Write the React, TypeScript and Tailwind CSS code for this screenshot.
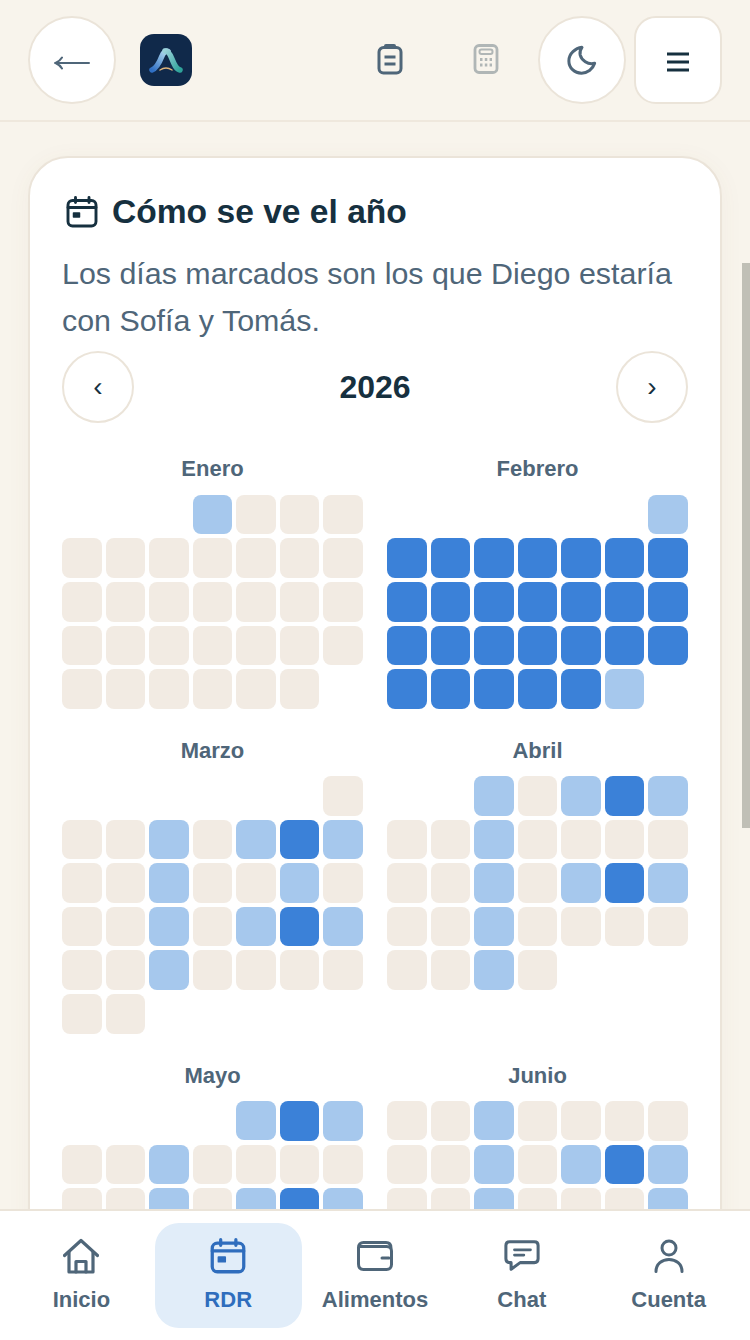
import React from "react";

const font = { fontFamily: "'Liberation Sans', Arial, sans-serif" };

type Month = { name: string; offset: number; days: number; pattern: string };

const months: Month[] = [
  { name: "Enero", offset: 3, days: 31, pattern: "l" },
  { name: "Febrero", offset: 6, days: 28, pattern: "lddddddddddddddddddddddddddl" },
  { name: "Marzo", offset: 6, days: 31, pattern: "b" + "bblbldl" + "bblbblb" + "bblbldl" + "bblbbbb" + "bb" },
  { name: "Abril", offset: 2, days: 30, pattern: "lbldl" + "bblbbbb" + "bblbldl" + "bblbbbb" + "bblb" },
  { name: "Mayo", offset: 4, days: 31, pattern: "ldl" + "bblbbbb" + "bblbldl" + "bblbbbb" + "bblbldl" },
  { name: "Junio", offset: 0, days: 30, pattern: "bblbbbb" + "bblbldl" + "bblbbbl" + "bblbbbb" + "bb" },
];

function Cell({ kind }: { kind: string }) {
  if (kind === "d") return <div className="aspect-square rounded-lg bg-[#3b81d8]" />;
  if (kind === "l") return <div className="aspect-square rounded-lg bg-[#a6c8ed]" />;
  return <div className="aspect-square rounded-lg bg-[#f2ebe3]" />;
}

function MonthGrid({ m }: { m: Month }) {
  const cells = [];
  for (let i = 0; i < m.offset; i++) cells.push(<div key={"e" + i} />);
  for (let d = 0; d < m.days; d++) cells.push(<Cell key={d} kind={m.pattern[d] || "b"} />);
  return (
    <div>
      <div className="mb-[12.4px] text-center text-[22px] leading-[26px] font-bold text-[#4f6679]">{m.name}</div>
      <div className="grid grid-cols-7 gap-1">{cells}</div>
    </div>
  );
}

function CalendarIcon({ size, color }: { size: number; color: string }) {
  return (
    <svg width={size} height={size} viewBox="0 0 32 32" fill="none" stroke={color} strokeWidth="2.9" strokeLinecap="round" strokeLinejoin="round">
      <rect x="2" y="4.5" width="28" height="25.5" rx="4.5" />
      <path d="M2 11.5H30M9.5 1.5V6.5M23 1.5V6.5" />
      <rect x="7.5" y="17" width="6" height="4" fill={color} strokeWidth="1.5" strokeLinejoin="round" />
    </svg>
  );
}

function NavItem({ label, active, children }: { label: string; active?: boolean; children: React.ReactNode }) {
  return (
    <div className={active ? "flex h-[105px] flex-col items-center rounded-3xl bg-[#e1edf9] pt-[14px] text-[#2f6dbd]" : "flex h-[105px] flex-col items-center rounded-3xl pt-[14px] text-[#4f6679]"}>
      <div className="flex h-[38px] w-9 items-center justify-center">{children}</div>
      <div className="mt-[11px] text-[22px] leading-[28px] font-bold whitespace-nowrap">{label}</div>
    </div>
  );
}

export default function App() {
  return (
    <div style={font} className="relative flex h-[1340px] w-[750px] flex-col overflow-hidden bg-[#f8f4ec]">
      <header className="flex h-[122px] shrink-0 items-start border-b-2 border-[#efe8dd] pt-[16px] pl-[28px] pr-[28px]">
        <button className="flex size-[88px] items-center justify-center rounded-full border-2 border-[#ebe4d9] bg-white">
          <svg width="36" height="20" viewBox="0 0 36 20" fill="none" stroke="#4f6679" strokeWidth="2" strokeLinecap="round" className="mt-[5px]">
            <path d="M2 10H35M8 4.500Q6 8 1.500 10Q6 12 8 15.500" />
          </svg>
        </button>
        <div className="mt-[18px] ml-[24px] flex size-[52px] items-center justify-center rounded-[14px] bg-[#10294a]">
          <svg width="36" height="30" viewBox="0 0 36 30" fill="none" strokeLinecap="round" className="mt-[2px]">
            <defs>
              <linearGradient id="lg1" x1="0" y1="1" x2="0.7" y2="0">
                <stop offset="0" stopColor="#2f6fc4" />
                <stop offset="1" stopColor="#a9d3ec" />
              </linearGradient>
              <linearGradient id="lg2" x1="0" y1="0" x2="1" y2="1">
                <stop offset="0" stopColor="#9ad2da" />
                <stop offset="1" stopColor="#2fa39a" />
              </linearGradient>
            </defs>
            <path d="M4 24C9 22 12 15 14 10C16 5.500 18 4.500 20 5.500" stroke="url(#lg1)" strokeWidth="5.500" />
            <path d="M17 5C20 4.500 22 8 24 13C26 18 28 23 32 24" stroke="url(#lg2)" strokeWidth="5.500" />
            <path d="M12 24Q18 20 24 24" stroke="#e0b57c" strokeWidth="1.400" />
          </svg>
        </div>
        <div className="ml-[180px] mt-[25px] flex size-[36px] items-center justify-center">
          <svg width="28" height="32" viewBox="0 0 28 32" fill="none" stroke="#4f6679" strokeWidth="3" strokeLinecap="round">
            <rect x="3" y="4.500" width="22" height="25.500" rx="4.500" />
            <path d="M10 3H18" strokeWidth="4" />
            <path d="M8.500 14H19.500M8.500 21H19.500" strokeWidth="3" strokeLinecap="butt" />
          </svg>
        </div>
        <div className="ml-[60px] mt-[25px] flex size-[36px] items-center justify-center">
          <svg width="26" height="30" viewBox="0 0 26 30" fill="none" stroke="#b0b6b6" strokeWidth="2.800">
            <rect x="2" y="1.500" width="22" height="27" rx="4" />
            <rect x="6.500" y="5.500" width="13" height="4.500" rx="2" strokeWidth="2" />
            <path d="M7 15.500H9.500M11.800 15.500H14.300M16.600 15.500H19M7 21H9.500M11.800 21H14.300M16.600 21H19" strokeWidth="3" />
          </svg>
        </div>
        <button className="ml-[34px] flex size-[88px] items-center justify-center rounded-full border-2 border-[#ebe4d9] bg-white">
          <svg width="30" height="30" viewBox="0 0 32 32" fill="none" stroke="#4f6679" strokeWidth="3.200" strokeLinejoin="round">
            <path d="M16 2.500C9 3.500 2 9 2 17C2 24.500 8 30 15.500 30C21.500 30 27.500 26 29.500 19.500C22 21.500 15.500 16 14 10.500C13.500 7.500 14.500 4.500 16 2.500Z" />
          </svg>
        </button>
        <button className="ml-[8px] flex size-[88px] items-center justify-center rounded-[22px] border-2 border-[#ebe4d9] bg-white">
          <svg width="22" height="20" viewBox="0 0 22 20" stroke="#16303f" strokeWidth="3" className="mt-[3px]">
            <path d="M0 2H22M0 10H22M0 18H22" />
          </svg>
        </button>
      </header>

      <main className="min-h-0 flex-1 overflow-hidden px-[28px] pt-[34px]">
        <section className="rounded-[40px] border-2 border-[#ebe4d9] bg-white px-[32px] pt-[30px] pb-10 shadow-[0_4px_24px_rgba(120,100,60,0.05)]">
          <div className="flex items-center gap-[14px] pl-[4px]">
            <CalendarIcon size={32} color="#16303f" />
            <h2 className="text-[33.6px] leading-[48px] font-bold text-[#16303f]">Cómo se ve el año</h2>
          </div>
          <p className="mt-[14px] text-[30.4px] leading-[47px] text-[#4f6679]">Los días marcados son los que Diego estaría con Sofía y Tomás.</p>
          <div className="mt-[7px] flex items-center justify-between">
            <button className="flex size-[72px] items-center justify-center rounded-full border-2 border-[#ebe4d9] text-[28px] leading-none text-[#16303f]">‹</button>
            <div className="text-[32px] font-bold text-[#16303f]">2026</div>
            <button className="flex size-[72px] items-center justify-center rounded-full border-2 border-[#ebe4d9] text-[28px] leading-none text-[#16303f]">›</button>
          </div>
          <div className="mt-[33.4px] grid grid-cols-2 gap-x-6 gap-y-[29px]">
            {months.map((m) => (
              <MonthGrid key={m.name} m={m} />
            ))}
          </div>
        </section>
      </main>

      <nav className="grid h-[131px] shrink-0 grid-cols-5 border-t-2 border-[#ebe4d9] bg-white px-2 pt-[12px]">
        <NavItem label="Inicio">
          <svg width="36" height="36" viewBox="0 0 36 36" fill="none" stroke="currentColor" strokeWidth="3.200" strokeLinecap="round" strokeLinejoin="round">
            <path d="M1.500 17.500L18 2.500L34.500 17.500" />
            <path d="M6 14V34H30V14" />
            <path d="M13 34V23.500H23V34" />
          </svg>
        </NavItem>
        <NavItem label="RDR" active>
          <CalendarIcon size={36} color="currentColor" />
        </NavItem>
        <NavItem label="Alimentos">
          <svg width="36" height="30" viewBox="0 0 36 30" fill="none" stroke="currentColor" strokeWidth="3" strokeLinecap="round" strokeLinejoin="round">
            <path d="M34 8V7C34 3.500 32 1.500 29 1.500H6.500C3.500 1.500 1.500 3.500 1.500 6.500V23C1.500 26.500 3.500 28.500 6.500 28.500H29.500C32.500 28.500 34.500 26.500 34.500 23.500V10C34.500 7 32.500 5.500 29.500 5.500H3" />
            <path d="M25 17H32" strokeWidth="3" />
          </svg>
        </NavItem>
        <NavItem label="Chat">
          <svg width="38" height="34" viewBox="0 0 38 34" fill="none" stroke="currentColor" strokeWidth="3.200" strokeLinecap="round" strokeLinejoin="round">
            <path d="M6 2H32C34.500 2 36 3.500 36 6V20C36 22.500 34.500 24 32 24H17L7.500 31V24H6C3.500 24 2 22.500 2 20V6C2 3.500 3.500 2 6 2Z" />
            <path d="M11 10.500H28M11 16H21" strokeWidth="2.800" />
          </svg>
        </NavItem>
        <NavItem label="Cuenta">
          <svg width="30" height="34" viewBox="0 0 30 34" fill="none" stroke="currentColor" strokeWidth="3" strokeLinecap="round">
            <circle cx="15" cy="9" r="7" />
            <path d="M2 32.500C2 25 8 20.500 15 20.500C22 20.500 28 25 28 32.500" />
          </svg>
        </NavItem>
      </nav>

      <div className="absolute top-[263px] right-0 h-[565px] w-2 bg-[#c0bfb6]" />
    </div>
  );
}
